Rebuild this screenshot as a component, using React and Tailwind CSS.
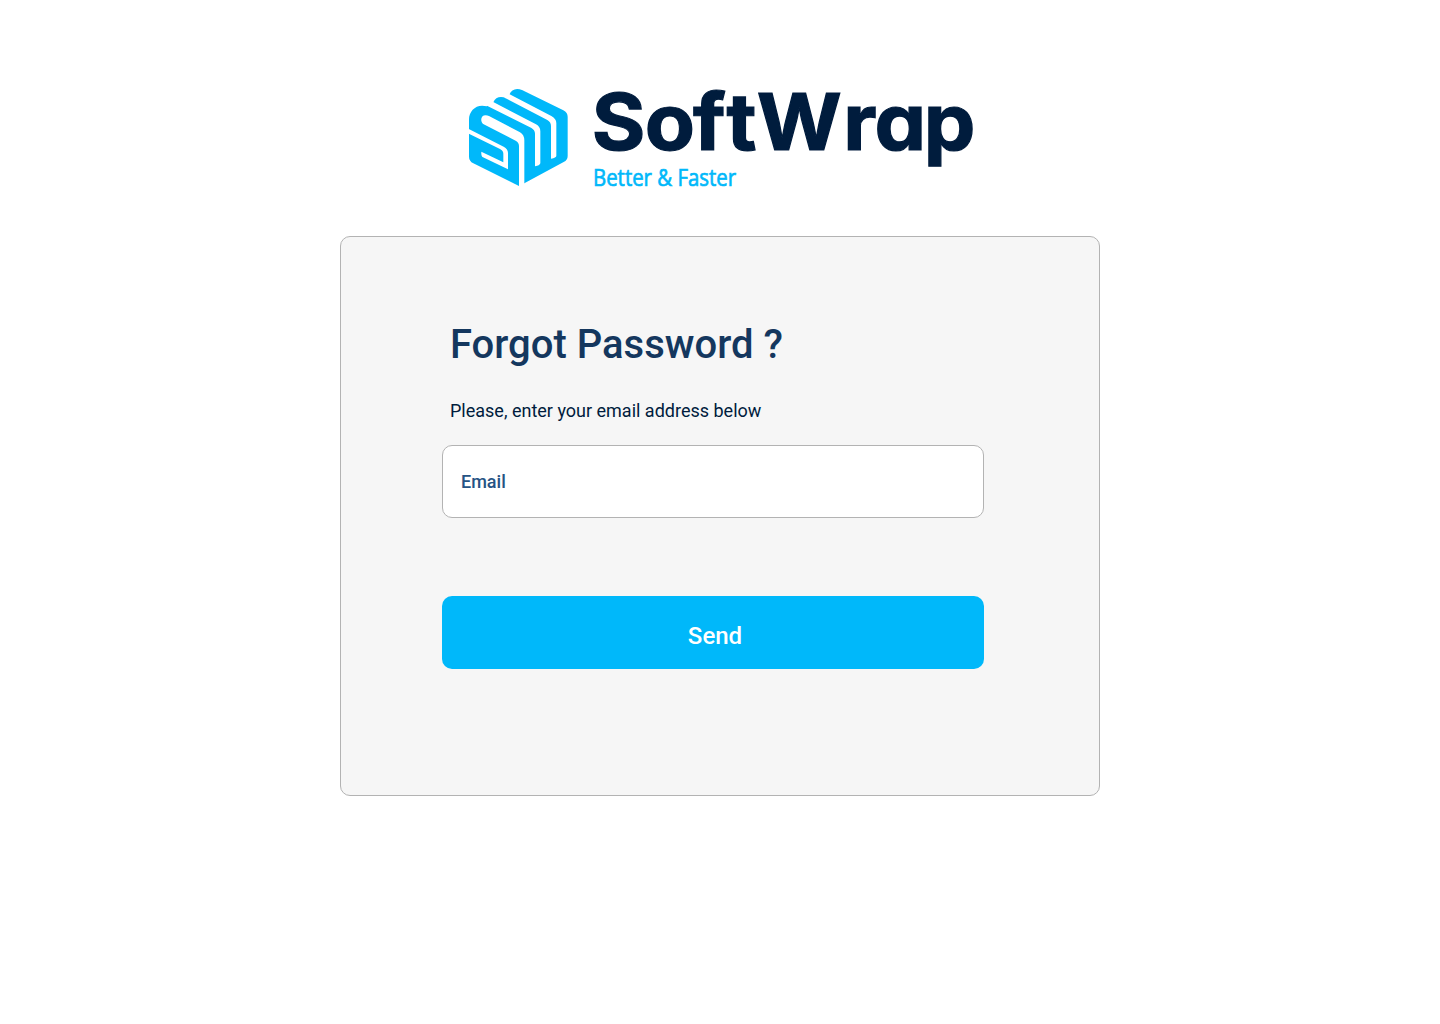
function Mark() {
  return (
    <svg viewBox="0 0 360 345" className="h-[115px] w-[120px] shrink-0" aria-hidden="true">
      <path
        fill="#00b8fa"
        d="M27 150V118C27 92 50 70 80 79L100 67C106 52 122 47 138 55L148 44C154 29 168 22 186 30L310 91Q323 98 323 110V228Q323 240 311 246L193 310L177 318L40 250Q27 243 27 230Z"
      />
      <g fill="#fff">
        <path d="M146 41L274 108Q289 116 289 130V227Q289 233 273 236V138Q273 126 262 120L134 53Z" />
        <path d="M94 63L228 133Q241 140 241 154V250Q239 257 225 259V161Q225 149 213 143L78 76Z" />
        <path d="M87 108L180 157Q193 165 193 181V325H177V198Q177 188 167 182L71 133C60 126 61 106 77 106Q82 106 87 108Z" />
        <path d="M22 145L131 200Q144 207 144 219V268L69 232Q63 229 64 215L130 247V221Q130 212 120 207L22 159Z" />
      </g>
    </svg>
  );
}

function Logo() {
  return (
    <div className="flex h-[115px] w-[520px]" role="img" aria-label="SoftWrap, Better & Faster">
      <Mark />
      <svg viewBox="0 0 400 115" className="h-[115px] w-[400px] shrink-0 overflow-visible">
        <text
          transform="translate(0 70) scale(1.05 1)"
          x="11.1 61.6 107.6 139.6 168.4 250.6 280.6 327.4"
          fill="#001c3d"
          stroke="#001c3d"
          strokeWidth="1.2"
          className="font-['Inter',sans-serif] text-[78px] font-bold [font-feature-settings:'cv11','ss01']"
        >
          SoftWrap
        </text>
        <text
          x="13"
          y="105.7"
          fill="#00b8fa"
          stroke="#00b8fa"
          strokeWidth="0.7"
          textLength="143"
          lengthAdjust="spacingAndGlyphs"
          className="font-['Open_Sans',sans-serif] text-[24px] font-medium"
        >
          Better &amp; Faster
        </text>
      </svg>
    </div>
  );
}

export default function App() {
  return (
    <main className="flex min-h-screen flex-col items-center bg-white pt-20 font-['Roboto',sans-serif]">
      <Logo />
      <section className="mt-[41px] h-[560px] w-[760px] rounded-[10px] border border-[#b3b3b3] bg-[#f6f6f6] pt-[84px] pl-[101px]">
        <h1 className="pl-2 text-[40px] leading-[47px] font-medium text-[#14375e]">Forgot Password ?</h1>
        <p className="mt-[32px] pl-2 text-[18px] leading-[21px] text-[#001c3d]">
          Please, enter your email address below
        </p>
        <form className="mt-6 w-[542px]" onSubmit={(e) => e.preventDefault()}>
          <input
            type="email"
            placeholder="Email"
            aria-label="Email"
            className="block h-[73px] w-full rounded-[10px] border border-[#b3b3b3] bg-white px-[18px] text-[18px] font-medium text-[#265384] placeholder:text-[#265384] placeholder:opacity-100"
          />
          <button
            type="submit"
            className="mt-[78px] block h-[73px] w-full rounded-[10px] bg-[#00b8fa] pt-[6px] pl-[4px] text-center text-[24px] font-medium text-white"
          >
            Send
          </button>
        </form>
      </section>
    </main>
  );
}
